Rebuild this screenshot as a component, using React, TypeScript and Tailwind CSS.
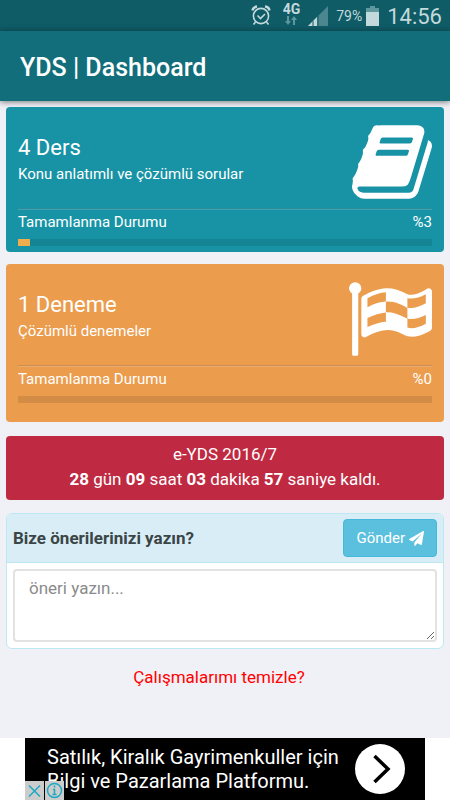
import React from 'react';

interface ProgressCardProps {
  title: string;
  description: string;
  percent: number;
  className: string;
  icon: React.ReactNode;
}

function BookIcon() {
  return (
    <svg viewBox="0 0 1664 1792" className="w-20 h-[86px]" fill="currentColor" aria-hidden="true">
      <path d="M1639 478q40 57 18 129l-275 906q-19 64-76.5 107.5t-122.5 43.5h-923q-77 0-148.5-53.5t-99.5-131.5q-24-67-2-127 0-4 3-27t4-37q1-8-3-21.5t-3-19.5q2-11 8-21t16.5-23.5 16.5-23.5q23-38 45-91.5t30-91.5q3-10 .5-30t-.5-28q3-11 17-28t17-23q21-36 42-92t25-90q1-9-2.5-32t.5-28q4-13 22-30.5t22-22.5q19-26 42.5-84.5t27.5-96.5q1-8-3-25.5t-2-26.5q2-8 9-18t18-23 17-21q8-12 16.5-30.5t15-35 16-36 19.5-32 26.5-23.5 36-11.5 47.5 5.5l-1 3q38-9 51-9h761q74 0 114 56t18 130l-274 906q-36 119-71.5 153.5t-128.5 34.5h-869q-27 0-38 15-11 16-1 43 24 70 144 70h923q29 0 56-15.5t35-41.5l300-987q7-22 5-57 38 15 59 43zm-1064 2q-4 13 2 22.5t20 9.5h608q13 0 25.5-9.5t16.5-22.5l21-64q4-13-2-22.5t-20-9.5h-608q-13 0-25.5 9.5t-16.5 22.5zm-83 256q-4 13 2 22.5t20 9.5h608q13 0 25.5-9.5t16.5-22.5l21-64q4-13-2-22.5t-20-9.5h-608q-13 0-25.5 9.5t-16.5 22.5z" />
    </svg>
  );
}

function FlagIcon() {
  return (
    <svg viewBox="128 0 1728 1792" className="w-[83px] h-[86px]" fill="currentColor" aria-hidden="true">
      <path d="M896 951v-192q-181 16-384 117v185q205-96 384-110zm0-418v-197q-172 8-384 126v189q215-111 384-118zm832 463v-184q-235 116-384 71v-224q-20-6-39-15-5-3-33-17t-34.500-17-31.500-15-34.500-15.500-32.500-13-36-12.500-35-8.500-39.500-7.500-39.500-4-44-2q-23 0-49 3v222h19q102 0 192.500 29t197.500 82q19 9 39 15v188q42 17 91 17 120 0 293-92zm0-427v-189q-169 91-306 91-45 0-78-8v196q148 42 384-90zm-1344-313q0 35-17.500 64t-46.500 46v1266q0 14-9 23t-23 9h-64q-14 0-23-9t-9-23v-1266q-29-17-46.500-46t-17.500-64q0-53 37.500-90.500t90.500-37.500 90.500 37.500 37.500 90.500zm1472 64v763q0 39-35 57-10 5-17 9-218 116-369 116-88 0-158-35l-28-14q-64-33-99-48t-91-29-114-14q-102 0-235.500 44t-228.500 102q-15 9-33 9-16 0-32-8-32-19-32-56v-742q0-35 31-55 35-21 78.500-42.500t114-52 152.500-49.500 155-19q112 0 209 31t209 86q38 19 89 19 122 0 310-112 22-12 31-17 31-16 62 2 31 20 31 54z" />
    </svg>
  );
}

function PlaneIcon() {
  return (
    <svg viewBox="0 0 1792 1792" className="w-[15px] h-[15px]" fill="currentColor" aria-hidden="true">
      <path d="M1764 11q33 24 27 64l-256 1536q-5 29-32 45-14 8-31 8-11 0-24-5l-453-185-242 295q-18 23-49 23-13 0-22-4-19-7-30.5-23.5t-11.5-36.500v-349l864-1059-1069 925-395-162q-37-14-40-55-2-40 32-59l1664-960q15-9 32-9 20 0 36 11z" />
    </svg>
  );
}

function StatusBar() {
  return (
    <div className="flex h-[31px] items-center justify-end bg-[#0f5b66] pr-2 text-[#c3d9dc]">
      <svg viewBox="0 0 20 21" className="mr-3 h-[21px] w-5" fill="none" stroke="currentColor" strokeWidth="1.600" aria-hidden="true">
        <circle cx="10" cy="11" r="7.600" />
        <path d="M6.500 10.500l3 3 4.500-4.500M4.500 17l-2 2.500M15.500 17l2 2.500" />
        <path d="M1.500 5.500Q2 2 6 1.500M18.500 5.500Q18 2 14 1.500" strokeWidth="2.400" />
      </svg>
      <div className="mr-2 flex flex-col items-center pb-1">
        <span className="text-[14px] leading-[14px] font-bold">4G</span>
        <svg viewBox="0 0 12 9" className="h-[9px] w-3 text-[#5e979e]" fill="currentColor" aria-hidden="true">
          <path d="M2 0h2v5h2L3 9 0 5h2zM8 9h2V4h2L9 0 6 4h2z" />
        </svg>
      </div>
      <svg viewBox="0 0 20 20" className="mr-2 h-5 w-5" aria-hidden="true">
        <path d="M20 0v20H0z" fill="#4c868e" />
        <path d="M9 11v9H0z" fill="currentColor" />
        <path d="M5 15v5M10 10v10" stroke="#0f5b66" strokeWidth="1" />
      </svg>
      <span className="mr-1 text-[14px] leading-5">79%</span>
      <svg viewBox="0 0 13 20" className="mr-2 h-5 w-[13px]" aria-hidden="true">
        <path d="M4 0h5v2h4v5H0V2h4z" fill="#5e979e" />
        <path d="M0 6h13v14H0z" fill="currentColor" />
      </svg>
      <span className="pt-[2px] text-[22px] leading-7">14:56</span>
    </div>
  );
}

function ProgressCard({ title, description, percent, className, icon }: ProgressCardProps) {
  return (
    <section className={`rounded px-3 text-white ${className}`}>
      <div className="flex h-[101px] items-start justify-between pt-3">
        <div className="pt-[13px]">
          <h2 className="text-[22px] leading-8">{title}</h2>
          <p className="text-[15px] leading-[21px]">{description}</p>
        </div>
        {icon}
      </div>
      <div className="h-[2px] border-t border-black/15 bg-white/15" />
      <div className="flex justify-between pt-[2px] text-[15px] leading-5">
        <span>Tamamlanma Durumu</span>
        <span>%{percent}</span>
      </div>
      <div className="mt-[7px] h-[7px] bg-black/10">
        <div className="h-full bg-[#f0ad4e]" style={{ width: `${percent}%` }} />
      </div>
    </section>
  );
}

function AdBanner() {
  return (
    <footer className="mt-auto bg-white">
      <div className="relative mx-auto flex h-[62px] max-w-[400px] items-center justify-between bg-black pr-5 pl-[22px] text-white">
        <p className="text-[20px] leading-6 whitespace-nowrap">
          Satılık, Kiralık Gayrimenkuller için
          <br />
          Bilgi ve Pazarlama Platformu.
        </p>
        <button type="button" aria-label="Aç" className="flex size-[50px] shrink-0 items-center justify-center rounded-full bg-white">
          <svg viewBox="0 0 50 50" className="size-[50px]" fill="none" stroke="#000" strokeWidth="3.500" aria-hidden="true">
            <path d="M19.500 12l13.500 13-13.500 13" />
          </svg>
        </button>
        <div className="absolute bottom-0 left-0 flex gap-px text-[#1ba9c4]">
          <button type="button" aria-label="Kapat" className="size-[19px] bg-[#cccccc]">
            <svg viewBox="0 0 19 19" fill="none" stroke="currentColor" strokeWidth="1.500" aria-hidden="true">
              <path d="M4 4.500l11 11M15 4.500l-11 11" />
            </svg>
          </button>
          <button type="button" aria-label="Reklam bilgisi" className="size-[19px] bg-[#cccccc]">
            <svg viewBox="0 0 19 19" fill="none" stroke="currentColor" strokeWidth="1.500" aria-hidden="true">
              <circle cx="9.500" cy="9.500" r="7" />
              <path d="M9.500 4.500v2M8 8.500h1.500v5M7.500 13.500h4" />
            </svg>
          </button>
        </div>
      </div>
    </footer>
  );
}

export default function App() {
  return (
    <div className="flex min-h-screen flex-col bg-[#f0f1f7] font-[Roboto,sans-serif]">
      <StatusBar />
      <header className="flex h-[70px] items-center bg-[#126e7b] px-5 pt-1 shadow-[0_1px_6px_rgba(0,0,0,0.5)]">
        <h1 className="text-[25px] leading-8 font-medium text-white">YDS | Dashboard</h1>
      </header>

      <main className="flex flex-col px-[6px] pt-[6px]">
        <ProgressCard
          title="4 Ders"
          description="Konu anlatımlı ve çözümlü sorular"
          percent={3}
          className="bg-[#1893a6] pb-[6px]"
          icon={<BookIcon />}
        />
        <ProgressCard
          title="1 Deneme"
          description="Çözümlü denemeler"
          percent={0}
          className="mt-3 bg-[#eb9c4d] pb-[19px]"
          icon={<FlagIcon />}
        />

        {/* Countdown */}
        <section className="mt-[14px] rounded bg-[#bf2a42] pt-[6px] pb-2 text-center text-[17px] leading-[25px] text-white">
          <p>e-YDS 2016/7</p>
          <p>
            <b>28</b> gün <b>09</b> saat <b>03</b> dakika <b>57</b> saniye kaldı.
          </p>
        </section>

        {/* Suggestion form */}
        <form className="mt-[13px] overflow-hidden rounded-md border border-[#bce8f1] bg-white" onSubmit={(e) => e.preventDefault()}>
          <div className="flex items-center justify-between border-b border-[#bce8f1] bg-[#d9edf7] px-[6px] py-[5px]">
            <label htmlFor="suggestion" className="text-[17px] leading-6 font-bold text-[#3a4545]">
              Bize önerilerinizi yazın?
            </label>
            <button type="submit" className="flex h-[38px] items-center gap-1 rounded border border-[#46b8da] bg-[#5bc0de] px-3 text-[15px] text-white">
              Gönder <PlaneIcon />
            </button>
          </div>
          <div className="p-[6px]">
            <textarea
              id="suggestion"
              placeholder="öneri yazın..."
              className="block h-[73px] w-full rounded border-2 border-[#e2e2e2] px-[14px] py-[5px] text-[17px] leading-6 outline-none placeholder:text-[#8b8b8b]"
            />
          </div>
        </form>

        <button type="button" className="mt-[14px] mr-3 self-center text-[17px] leading-7 text-[#ff0000]">
          Çalışmalarımı temizle?
        </button>
      </main>

      <AdBanner />
    </div>
  );
}
